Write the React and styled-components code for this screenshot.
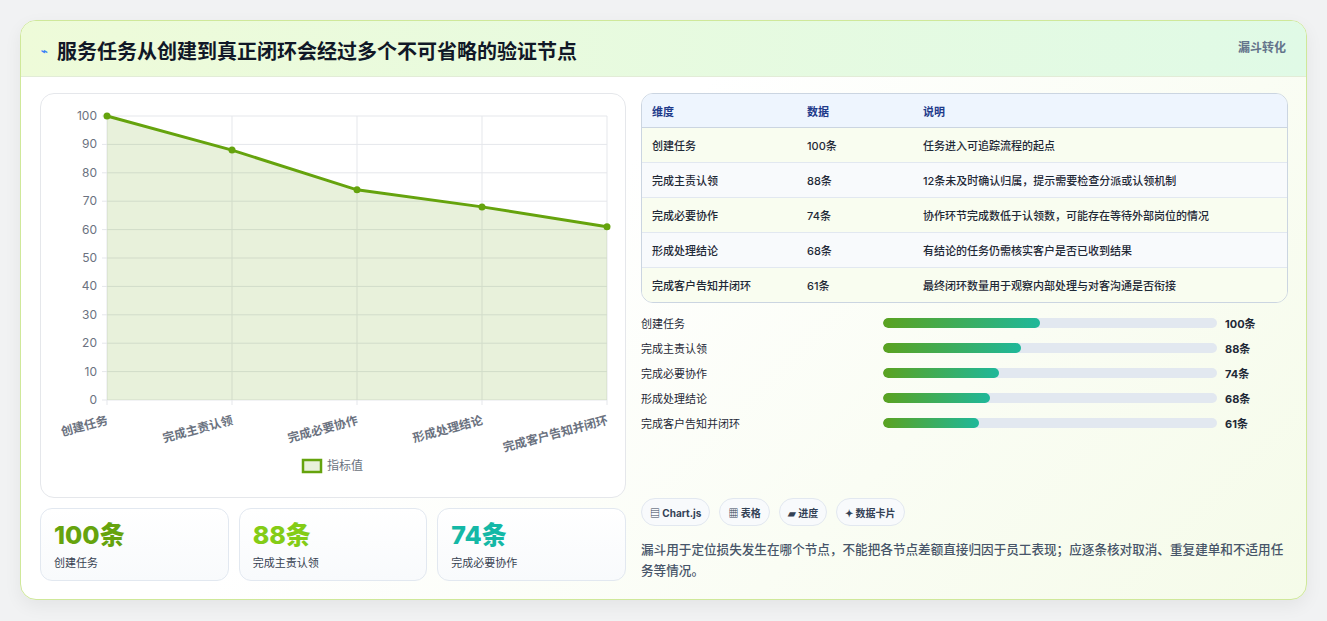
import React from 'react';
import styled, { createGlobalStyle } from 'styled-components';

const Global = createGlobalStyle`
  body { margin: 0; background: #f1f2f3; font-family: "Inter", "Noto Sans CJK SC", sans-serif; }
`;

const rows = [
  { name: '创建任务', v: 100, note: '任务进入可追踪流程的起点' },
  { name: '完成主责认领', v: 88, note: '12条未及时确认归属，提示需要检查分派或认领机制' },
  { name: '完成必要协作', v: 74, note: '协作环节完成数低于认领数，可能存在等待外部岗位的情况' },
  { name: '形成处理结论', v: 68, note: '有结论的任务仍需核实客户是否已收到结果' },
  { name: '完成客户告知并闭环', v: 61, note: '最终闭环数量用于观察内部处理与对客沟通是否衔接' },
];

const Page = styled.div`
  padding: 20px 20px 22px 20px;
  width: 1287px;
`;
const Card = styled.div`
  border: 1px solid #cfe89a;
  border-radius: 16px;
  background: linear-gradient(135deg, #ffffff 40%, #f5fbe9);
  box-shadow: 0 6px 18px rgba(0,0,0,0.06);
  overflow: hidden;
`;
const Header = styled.div`
  display: flex;
  justify-content: space-between;
  align-items: flex-start;
  height: 56px;
  box-sizing: border-box;
  padding: 15px 20px 0 20px;
  background: linear-gradient(90deg, #eefbd9, #e0fae6);
  border-bottom: 1px solid #e2ecd7;
`;
const Title = styled.h1`
  margin: 0;
  font-size: 20px;
  font-weight: 700;
  color: #111827;
  display: flex;
  align-items: center;
  gap: 9px;
  span { font-size: 11px; color: #3b82f6; }
`;
const Tag = styled.div`
  font-size: 12px;
  font-weight: 700;
  color: #64748b;
  padding-top: 2px;
`;
const Body = styled.div`
  display: grid;
  grid-template-columns: 586px 647px;
  gap: 15px;
  padding: 16px 19px 18px 19px;
`;
const Col = styled.div`
  display: flex;
  flex-direction: column;
`;
const ChartBox = styled.div`
  height: 403px;
  border: 1px solid #e5e7eb;
  border-radius: 14px;
  background: #fff;
`;
const Stats = styled.div`
  display: grid;
  grid-template-columns: repeat(3, 1fr);
  gap: 10px;
  margin-top: 10px;
`;
const Stat = styled.div`
  height: 73px;
  box-sizing: border-box;
  border: 1px solid #e2e8f0;
  border-radius: 12px;
  background: linear-gradient(180deg, #fff, #f8fafc);
  padding: 10px 13px;
  b { display: block; font-size: 25px; font-weight: 800; color: ${p => p.c}; line-height: 32px; }
  small { font-size: 11px; color: #374151; }
`;
const Table = styled.table`
  width: 100%;
  border-collapse: collapse;
  font-size: 11px;
  color: #1f2937;
`;
const TableWrap = styled.div`
  border: 1px solid #cbd5e1;
  border-radius: 12px;
  overflow: hidden;
  th { background: #eef5fe; color: #1e3a8a; font-weight: 700; text-align: left; height: 33px; padding: 0 10px; border-bottom: 1px solid #cbd5e1; }
  td { height: 34px; padding: 0 10px; border-top: 1px solid #e2e8f0; font-weight: 500; }
  tr:nth-child(odd) td { background: #f9fdf0; }
  tr:nth-child(even) td { background: #f8fafc; }
`;
const Bars = styled.div`
  display: flex;
  flex-direction: column;
  gap: 11px;
  margin-top: 12px;
`;
const BarRow = styled.div`
  display: grid;
  grid-template-columns: 234px 334px 60px;
  gap: 8px;
  align-items: center;
  font-size: 11px;
  color: #1f2937;
  height: 14px;
  b { font-weight: 700; }
`;
const Track = styled.div`
  height: 10px;
  border-radius: 5px;
  background: #e2e8f0;
  overflow: hidden;
`;
const Fill = styled.div`
  height: 100%;
  border-radius: 5px;
  background: linear-gradient(90deg, #5aa21f, #1fb89a);
`;
const Chips = styled.div`
  display: flex;
  gap: 9px;
  margin-top: auto;
`;
const Chip = styled.div`
  height: 28px;
  box-sizing: border-box;
  padding: 0 8px;
  display: flex;
  align-items: center;
  border: 1px solid #e2e8f0;
  border-radius: 14px;
  background: #f8fafc;
  font-size: 10px;
  font-weight: 700;
  color: #334155;
`;
const Note = styled.p`
  margin: 13px 0 0;
  font-size: 12.6px;
  line-height: 21px;
  color: #475569;
  font-weight: 500;
`;

const Chart = () => {
  const x0 = 66, x1 = 566, yT = 22, yB = 306;
  const xs = [0, 1, 2, 3, 4].map(i => x0 + i * 125);
  const y = v => yB - (v / 100) * (yB - yT);
  const pts = rows.map((r, i) => `${xs[i]},${y(r.v)}`).join(' ');
  return (
    <svg width="586" height="403" fontFamily="Inter, 'Noto Sans CJK SC', sans-serif">
      {[0,10,20,30,40,50,60,70,80,90,100].map(v => (
        <g key={v}>
          <line x1={x0 - 5} x2={x1} y1={y(v)} y2={y(v)} stroke="#e5e7eb" />
          <text x={x0 - 10} y={y(v) + 4} fontSize="12" fill="#6b7280" textAnchor="end">{v}</text>
        </g>
      ))}
      {xs.map(x => <line key={x} x1={x} x2={x} y1={yT} y2={yB + 5} stroke="#e5e7eb" />)}
      <polygon points={`${x0},${yB} ${pts} ${x1},${yB}`} fill="rgba(101,163,13,0.15)" />
      <polyline points={pts} fill="none" stroke="#65a30d" strokeWidth="3" />
      {rows.map((r, i) => <circle key={i} cx={xs[i]} cy={y(r.v)} r="3.5" fill="#65a30d" />)}
      {rows.map((r, i) => (
        <text key={i} x={xs[i]} y={yB + 24} fontSize="12" fill="#6b7280" fontWeight="600"
          textAnchor="end" transform={`rotate(-15 ${xs[i]} ${yB + 18})`}>{r.name}</text>
      ))}
      <rect x="262" y="366" width="18" height="12" fill="rgba(101,163,13,0.15)" stroke="#65a30d" strokeWidth="2.5" />
      <text x="286" y="376" fontSize="12" fill="#6b7280">指标值</text>
    </svg>
  );
};

export default function App() {
  return (
    <Page>
      <Global />
      <Card>
        <Header>
          <Title><span>⌁</span>服务任务从创建到真正闭环会经过多个不可省略的验证节点</Title>
          <Tag>漏斗转化</Tag>
        </Header>
        <Body>
          <Col>
            <ChartBox><Chart /></ChartBox>
            <Stats>
              <Stat c="#65a30d"><b>100条</b><small>创建任务</small></Stat>
              <Stat c="#84cc16"><b>88条</b><small>完成主责认领</small></Stat>
              <Stat c="#14b8a6"><b>74条</b><small>完成必要协作</small></Stat>
            </Stats>
          </Col>
          <Col>
            <TableWrap>
              <Table>
                <thead><tr><th style={{ width: 135 }}>维度</th><th style={{ width: 96 }}>数据</th><th>说明</th></tr></thead>
                <tbody>
                  {rows.map(r => <tr key={r.name}><td>{r.name}</td><td>{r.v}条</td><td>{r.note}</td></tr>)}
                </tbody>
              </Table>
            </TableWrap>
            <Bars>
              {rows.map(r => (
                <BarRow key={r.name}>
                  <span>{r.name}</span>
                  <Track><Fill style={{ width: `${r.v * 0.47}%` }} /></Track>
                  <b>{r.v}条</b>
                </BarRow>
              ))}
            </Bars>
            <Chips>
              <Chip>▤ Chart.js</Chip>
              <Chip>▦ 表格</Chip>
              <Chip>▰ 进度</Chip>
              <Chip>✦ 数据卡片</Chip>
            </Chips>
            <Note>漏斗用于定位损失发生在哪个节点，不能把各节点差额直接归因于员工表现；应逐条核对取消、重复建单和不适用任务等情况。</Note>
          </Col>
        </Body>
      </Card>
    </Page>
  );
}
